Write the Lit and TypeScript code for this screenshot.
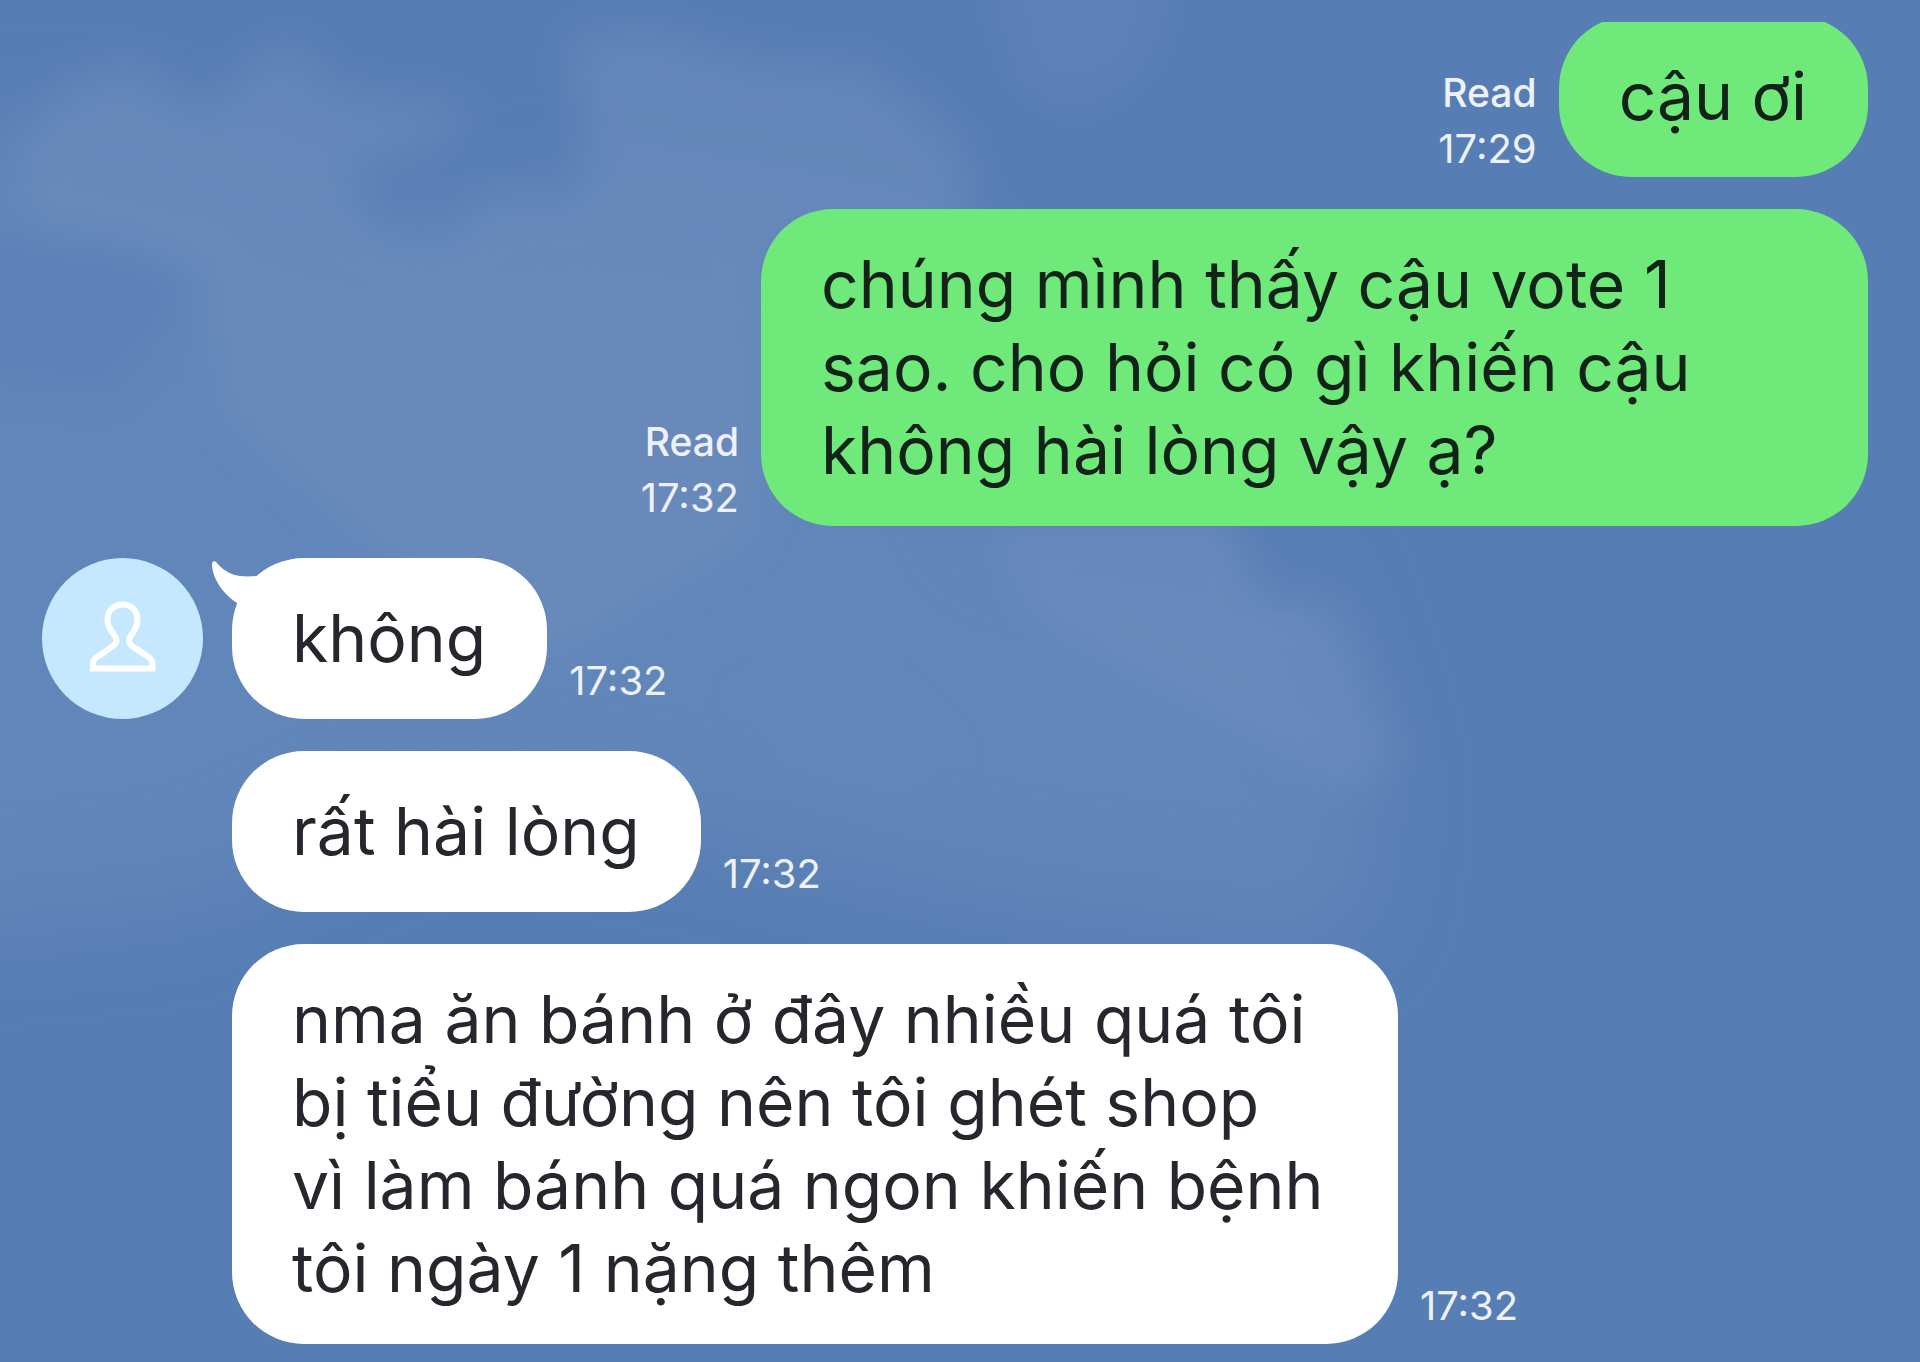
import { LitElement, html, css, svg } from "lit";
import { customElement } from "lit/decorators.js";

interface Message {
  lines: string[];
  time: string;
  sent?: boolean;
  read?: boolean;
  first?: boolean;
  clipped?: boolean;
}

const MESSAGES: Message[] = [
  { sent: true, read: true, clipped: true, time: "17:29", lines: ["cậu ơi"] },
  {
    sent: true,
    read: true,
    time: "17:32",
    lines: ["chúng mình thấy cậu vote 1", "sao. cho hỏi có gì khiến cậu", "không hài lòng vậy ạ?"],
  },
  { first: true, time: "17:32", lines: ["không"] },
  { time: "17:32", lines: ["rất hài lòng"] },
  {
    time: "17:32",
    lines: [
      "nma ăn bánh ở đây nhiều quá tôi",
      "bị tiểu đường nên tôi ghét shop",
      "vì làm bánh quá ngon khiến bệnh",
      "tôi ngày 1 nặng thêm",
    ],
  },
];

@customElement("app-root")
export class AppRoot extends LitElement {
  static styles = css`
    :host {
      display: block;
      position: relative;
      min-height: 100vh;
      box-sizing: border-box;
      overflow: hidden;
      background: #577eb4;
      font-family: Inter, "Noto Sans", sans-serif;
    }
    .sky {
      position: absolute;
      inset: 0;
      width: 100%;
      height: 100%;
    }
    .chat {
      position: relative;
      display: flex;
      flex-direction: column;
      gap: 32px;
      margin: 0;
      padding: 16px 52px 18px 42px;
      list-style: none;
    }
    .row {
      display: flex;
      align-items: flex-end;
      gap: 22px;
    }
    .sent {
      justify-content: flex-end;
    }
    .received {
      padding-left: 190px;
    }
    .with-avatar {
      padding-left: 0;
    }
    .avatar {
      flex: none;
      width: 161px;
      height: 161px;
      margin-right: 7px;
    }
    .bubble {
      position: relative;
      box-sizing: border-box;
      display: flex;
      align-items: center;
      min-height: 161px;
      padding: 34px 61px 34px 60px;
      border-radius: 72px;
      background: #fff;
      color: #26262d;
      font-size: 66px;
      line-height: 83px;
    }
    .sent .bubble {
      background: #70e97b;
      color: #14231a;
    }
    .long {
      width: min(1166px, 100%);
    }
    .sent .long {
      width: min(1107px, 100%);
    }
    .clipped {
      clip-path: inset(6px 0 0 0);
    }
    .text {
      margin: 0;
      white-space: pre-line;
    }
    .tail {
      position: absolute;
      left: -20px;
      top: 2px;
      width: 60px;
      height: 50px;
    }
    .meta {
      display: flex;
      flex-direction: column;
      flex: none;
      padding-bottom: 10px;
      color: #eef1fa;
      font-size: 40px;
      line-height: 56px;
      text-align: left;
    }
    .sent .meta {
      padding-bottom: 0;
      text-align: right;
    }
    .status {
      font-size: 39px;
      font-weight: 500;
    }
  `;

  private sky() {
    return html`<svg class="sky" viewBox="0 0 1920 1362" preserveAspectRatio="none" aria-hidden="true">
      ${svg`
      <defs>
        <filter id="soft" x="-30%" y="-30%" width="160%" height="160%" color-interpolation-filters="sRGB"><feGaussianBlur stdDeviation="20" /></filter>
        <filter id="wide" x="-40%" y="-40%" width="180%" height="180%" color-interpolation-filters="sRGB"><feGaussianBlur stdDeviation="50" /></filter>
      </defs>
      <path d="M-200 150 L120 130 L340 230 L600 200 L940 260 L1000 520 L1300 560 L1370 780 L1350 940 L1000 900 L700 830 L450 790 L200 900 L-200 940 Z" fill="#6387ba" opacity=".9" filter="url(#wide)" />
      <path d="M15 150 L60 90 L130 60 L200 110 L250 70 L290 45 L335 90 L390 100 L475 112 L425 150 L360 165 L365 225 L440 245 L500 190 L570 205 L585 150 L573 40 L650 32 L760 65 L860 70 L930 120 L965 160 L975 260 L760 260 L760 540 L560 660 L380 560 L220 420 L200 270 L100 250 L30 230 Z" fill="#6c8cbc" opacity=".65" filter="url(#soft)" />
      <path d="M980 520 L1230 510 L1270 590 L1340 610 L1400 760 L1350 800 L1250 740 L1130 680 L1030 620 Z" fill="#6d8cbd" opacity=".6" filter="url(#soft)" />
      <path d="M740 700 L880 690 L950 760 L900 790 L800 770 Z" fill="#6a8abc" opacity=".35" filter="url(#soft)" />
      <path d="M990 -40 L1170 -40 L1150 60 L1080 110 L1020 80 Z" fill="#6486b9" opacity=".4" filter="url(#soft)" />
      <path d="M-40 240 L120 250 L190 290 L150 340 L110 390 L-40 370 Z" fill="#587eb6" opacity=".6" filter="url(#soft)" />
      <path d="M1245 510 L1320 510 L1310 590 L1260 590 Z" fill="#577eb4" opacity=".7" filter="url(#soft)" />
      `}
    </svg>`;
  }

  private avatar() {
    return html`<svg class="avatar" viewBox="0 0 161 161" role="img" aria-label="Avatar">
      <circle cx="80.5" cy="80.5" r="80.5" fill="#c6e8ff" />
      <path d="M80.5 46.5C71 46.5 65.5 53.5 65.5 62C65.5 73 74.5 76 74.5 83C74.500 86 72 87.5 69 89.500L55 99C52 101 51 103 51 106V110.500H110.500V106C110.500 103 109.500 101 106.500 99L92 89.500C89 87.500 87 86 87 83C87 76 95.500 73 95.500 62C95.500 53.500 90 46.500 80.500 46.500Z" fill="none" stroke="#fff" stroke-width="6" />
    </svg>`;
  }

  private message(m: Message) {
    const row = `row ${m.sent ? "sent" : "received"} ${m.first ? "with-avatar" : ""}`;
    const bubble = `bubble ${m.lines.length > 1 ? "long" : ""} ${m.clipped ? "clipped" : ""}`;
    const meta = html`<div class="meta">
      ${m.read ? html`<span class="status">Read</span>` : ""}<time>${m.time}</time>
    </div>`;
    return html`<li class=${row}>
      ${m.first ? this.avatar() : ""} ${m.sent ? meta : ""}
      <div class=${bubble}>
        ${m.first
          ? html`<svg class="tail" viewBox="0 0 60 50" aria-hidden="true">
              <path d="M0 4C0 1 3 0 5 3C14 14 26 18 45 16L58 40L27 48L25 43C11 34 0 18 0 4z" fill="#fff" />
            </svg>`
          : ""}
        <p class="text">${m.lines.join("\n")}</p>
      </div>
      ${m.sent ? "" : meta}
    </li>`;
  }

  render() {
    return html`${this.sky()}
      <ol class="chat">
        ${MESSAGES.map((m) => this.message(m))}
      </ol>`;
  }
}
